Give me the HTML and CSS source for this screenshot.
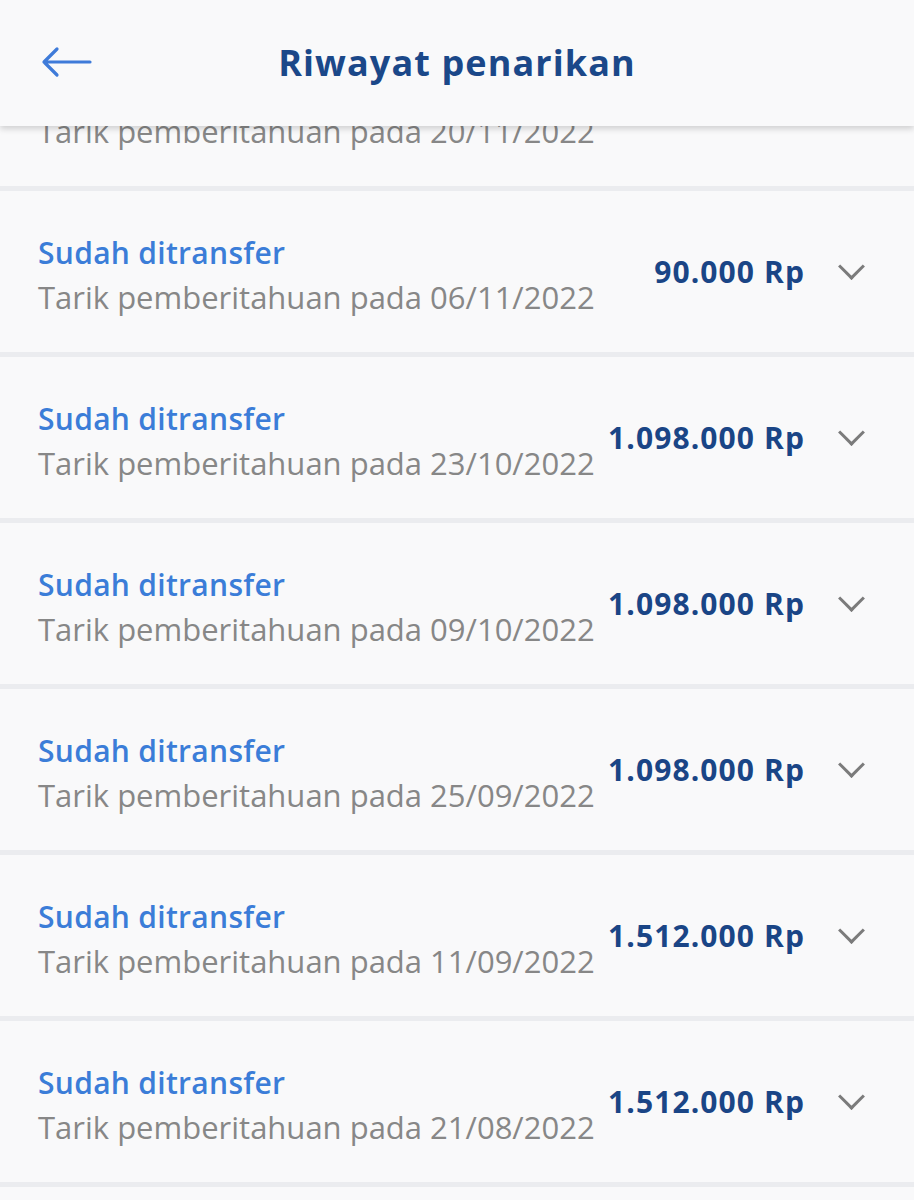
FILE: index.html
```html
<!DOCTYPE html>
<html lang="id">
<head>
  <meta charset="UTF-8" />
  <meta name="viewport" content="width=device-width, initial-scale=1.0" />
  <title>Riwayat penarikan</title>
  <link rel="stylesheet" href="styles.css">
</head>
<body>
  <!-- Top bar, sits over the scrolled list -->
  <header class="topbar">
    <button class="back" aria-label="Kembali">
      <svg width="52" height="34" viewBox="0 0 52 34">
        <path d="M50 16H4M17 3L4 16l13 13" fill="none" stroke="#3f7bd9" stroke-width="3.2" stroke-linecap="round" stroke-linejoin="round"/>
      </svg>
    </button>
    <h1>Riwayat penarikan</h1>
  </header>

  <!-- Withdrawal list -->
  <main class="list">
    <div class="item">
      <div class="info">
        <div class="status">Sudah ditransfer</div>
        <div class="date">Tarik pemberitahuan pada 20/11/2022</div>
      </div>
      <div class="amount">90.000 Rp</div>
      <span class="chev"></span>
    </div>
    <div class="item">
      <div class="info">
        <div class="status">Sudah ditransfer</div>
        <div class="date">Tarik pemberitahuan pada 06/11/2022</div>
      </div>
      <div class="amount">90.000 Rp</div>
      <span class="chev"></span>
    </div>
    <div class="item">
      <div class="info">
        <div class="status">Sudah ditransfer</div>
        <div class="date">Tarik pemberitahuan pada 23/10/2022</div>
      </div>
      <div class="amount">1.098.000 Rp</div>
      <span class="chev"></span>
    </div>
    <div class="item">
      <div class="info">
        <div class="status">Sudah ditransfer</div>
        <div class="date">Tarik pemberitahuan pada 09/10/2022</div>
      </div>
      <div class="amount">1.098.000 Rp</div>
      <span class="chev"></span>
    </div>
    <div class="item">
      <div class="info">
        <div class="status">Sudah ditransfer</div>
        <div class="date">Tarik pemberitahuan pada 25/09/2022</div>
      </div>
      <div class="amount">1.098.000 Rp</div>
      <span class="chev"></span>
    </div>
    <div class="item">
      <div class="info">
        <div class="status">Sudah ditransfer</div>
        <div class="date">Tarik pemberitahuan pada 11/09/2022</div>
      </div>
      <div class="amount">1.512.000 Rp</div>
      <span class="chev"></span>
    </div>
    <div class="item">
      <div class="info">
        <div class="status">Sudah ditransfer</div>
        <div class="date">Tarik pemberitahuan pada 21/08/2022</div>
      </div>
      <div class="amount">1.512.000 Rp</div>
      <span class="chev"></span>
    </div>
  </main>
</body>
</html>
```

FILE: styles.css
```css
:root {
  --bg: #f9f9fa;
  --sep: #ebecef;
  --title: #1b4889;
  --blue: #3b7dd8;
  --navy: #1a4586;
  --grey: #878787;
}
* {
  margin: 0;
  padding: 0;
  box-sizing: border-box;
}
html, body {
  height: 100%;
  overflow: hidden;
}
body {
  background: var(--bg);
  font-family: 'Open Sans', 'Noto Sans', sans-serif;
  color: #333;
  position: relative;
}
/* Top bar */
.topbar {
  position: absolute;
  top: 0;
  left: 0;
  right: 0;
  height: 126px;
  background: var(--bg);
  box-shadow: 0 3px 6px rgba(0, 0, 0, 0.16);
  display: flex;
  align-items: center;
  justify-content: center;
  z-index: 10;
}
.topbar .back {
  position: absolute;
  left: 40px;
  top: 46px;
  background: none;
  border: none;
  display: flex;
}
.topbar h1 {
  font-size: 36px;
  font-weight: 700;
  color: var(--title);
  letter-spacing: 1.1px;
  margin-top: -2px;
}
/* List */
.list {
  padding-top: 25px;
}
.item {
  height: 166px;
  border-bottom: 5px solid var(--sep);
  display: flex;
  align-items: center;
  padding: 0 53px 0 38px;
}
.info {
  flex: 1;
  display: flex;
  flex-direction: column;
  gap: 1px;
  margin-top: 8px;
}
.status {
  font-size: 30px;
  font-weight: 600;
  color: var(--blue);
  letter-spacing: 0.3px;
  line-height: 42px;
}
.date {
  font-size: 31px;
  color: var(--grey);
  line-height: 44px;
  white-space: nowrap;
}
.amount {
  font-size: 30px;
  font-weight: 700;
  color: var(--navy);
  letter-spacing: 1.1px;
  white-space: nowrap;
  margin-right: 37px;
}
.chev {
  width: 19px;
  height: 19px;
  border-right: 3.5px solid #7b7b7b;
  border-bottom: 3.5px solid #7b7b7b;
  transform: rotate(45deg);
  margin-top: -10px;
}
```
